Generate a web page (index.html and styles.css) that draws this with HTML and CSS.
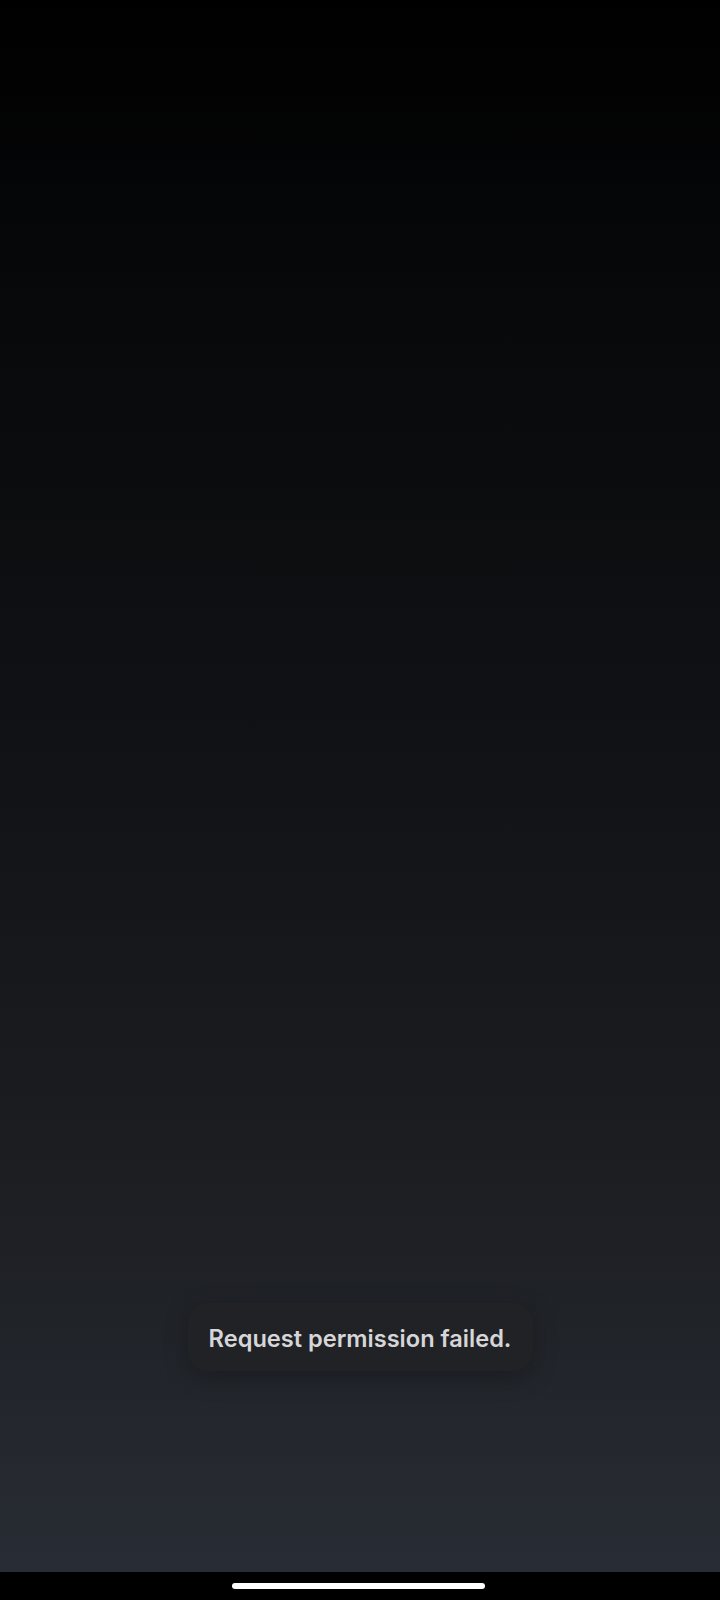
FILE: index.html
```html
<!DOCTYPE html>
<html lang="en">
<head>
  <meta charset="UTF-8">
  <title>Permission</title>
  <link rel="stylesheet" href="styles.css">
</head>
<body>

  <div class="pantalla">
    <div class="fondo">
      <div class="toast">Request permission failed.</div>
    </div>
    <div class="barra-nav">
      <div class="indicador"></div>
    </div>
  </div>

</body>
</html>
```

FILE: styles.css
```css
html, body {
  margin: 0;
  padding: 0;
  background-color: #000;
}

body {
  font-family: Inter, 'Noto Sans', sans-serif;
}

.pantalla {
  width: 720px;
  height: 1600px;
  display: flex;
  flex-direction: column;
}

.fondo {
  flex: 1;
  display: flex;
  flex-direction: column;
  justify-content: flex-end;
  align-items: center;
  padding-bottom: 201px;
  background: linear-gradient(#000 0%, #08090b 20%, #111316 50%, #1c1e22 75%, #282c34 100%);
}

.toast {
  box-sizing: border-box;
  width: 345px;
  height: 68px;
  padding-top: 3px;
  display: flex;
  align-items: center;
  justify-content: center;
  background-color: #212225;
  color: #d6d6d8;
  font-size: 23.6px;
  font-weight: 600;
  border-radius: 20px;
  box-shadow: 0 6px 24px rgba(0, 0, 0, 0.25);
}

.barra-nav {
  height: 28px;
  background-color: #000;
  display: flex;
  justify-content: center;
  padding-top: 11px;
  padding-right: 3px;
  box-sizing: border-box;
}

.indicador {
  width: 253px;
  height: 6px;
  border-radius: 3px;
  background-color: #fff;
}
```
